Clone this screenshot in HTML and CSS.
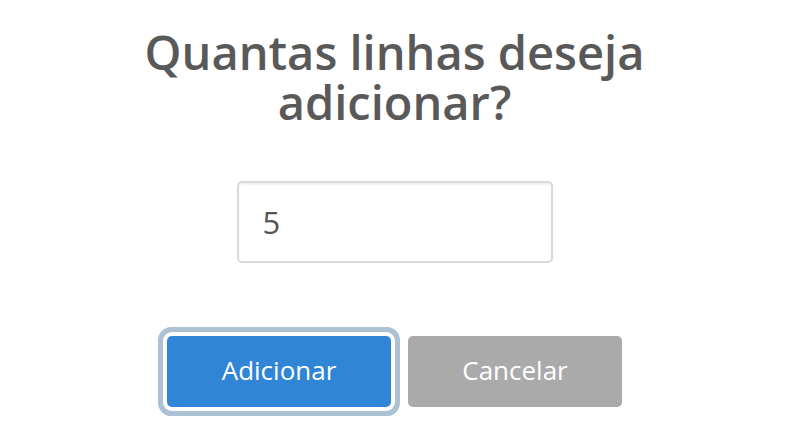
FILE: index.html
```html
<!DOCTYPE html>
<html lang="pt">
<head>
<meta charset="utf-8">
<title>Adicionar linhas</title>
<link rel="stylesheet" href="styles.css">
</head>
<body>
<div class="popup">
  <h2 class="title">Quantas linhas deseja adicionar?</h2>
  <input class="field" type="text" value="5">
  <div class="actions">
    <button class="btn confirm" type="button">Adicionar</button>
    <button class="btn cancel" type="button">Cancelar</button>
  </div>
</div>
</body>
</html>
```

FILE: styles.css
```css
html, body {
  margin: 0;
  padding: 0;
  background: #fff;
  font-family: "Open Sans", "Liberation Sans", sans-serif;
}

.popup {
  display: flex;
  flex-direction: column;
  align-items: center;
  padding-top: 27px;
  padding-bottom: 28px;
}

.title {
  margin: 0;
  width: 580px;
  font-size: 47px;
  line-height: 50px;
  font-weight: 600;
  color: #595959;
  text-align: center;
}

.field {
  margin-top: 54px;
  width: 316px;
  height: 82px;
  box-sizing: border-box;
  border: 2px solid #d9d9d9;
  border-radius: 5px;
  box-shadow: inset 0 2px 2px rgba(0, 0, 0, 0.06);
  padding: 0 24px;
  font-family: "Open Sans", "Liberation Sans", sans-serif;
  font-size: 31px;
  color: #545454;
  outline: none;
}

.actions {
  margin-top: 73px;
  display: flex;
  gap: 17px;
}

.btn {
  height: 71px;
  border: none;
  border-radius: 5px;
  color: #fff;
  font-family: "Open Sans", "Liberation Sans", sans-serif;
  font-size: 26px;
  padding: 0 0 4px;
  cursor: pointer;
}

.confirm {
  width: 224px;
  background: #3085d6;
  box-shadow: 0 0 0 4px #fff, 0 0 0 9px rgba(50, 100, 150, 0.4);
}

.cancel {
  width: 214px;
  background: #aaa;
}
```
